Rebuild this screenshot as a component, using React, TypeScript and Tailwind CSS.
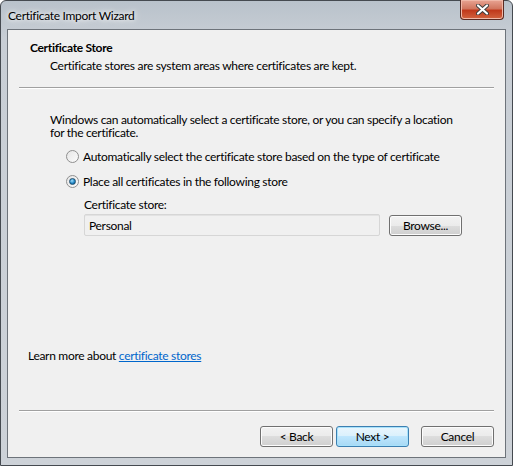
import { useState } from 'react'

const FONT = "font-['Lato',_'Noto_Sans',_sans-serif]"

function Radio({ checked, label, onClick }: { checked: boolean; label: string; onClick: () => void }) {
  return (
    <button type="button" onClick={onClick} className="flex items-center gap-[4px] text-left">
      <span className="flex h-[13px] w-[13px] items-center justify-center rounded-full border border-[#8f8f8f] bg-gradient-to-br from-[#e6e6e6] to-[#fbfbfb]">
        {checked && (
          <span className="h-[7px] w-[7px] rounded-full border border-[#1f4f6f] bg-[radial-gradient(circle_at_40%_35%,_#9ee0ff,_#1a7fbf_60%,_#0b4a7a)]" />
        )}
      </span>
      <span>{label}</span>
    </button>
  )
}

function WinButton({ children, focused }: { children: React.ReactNode; focused?: boolean }) {
  return (
    <button
      type="button"
      className={`flex h-[21px] w-[73px] items-center justify-center rounded-[3px] border text-[12px] text-black ${
        focused
          ? 'border-[#3c7fb1] bg-[linear-gradient(#eaf6fd_0%,#d9f0fc_50%,#bee6fd_50%,#a7d9f5_100%)] shadow-[inset_0_0_0_1px_#a8e2fb]'
          : 'border-[#707070] bg-[linear-gradient(#f2f2f2_0%,#ebebeb_50%,#dddddd_50%,#cfcfcf_100%)] shadow-[inset_0_0_0_1px_#fcfcfc]'
      }`}
    >
      {children}
    </button>
  )
}

export default function App() {
  const [mode, setMode] = useState<'auto' | 'place'>('place')

  return (
    <div className={`${FONT} h-[466px] w-[513px] text-[12px] leading-[13px] tracking-[-0.3px] text-black`}>
      <div className="flex h-full w-full flex-col rounded-t-[6px] border border-[#454a50] bg-[linear-gradient(180deg,#b9c2cb_0%,#c8ced5_8%,#cdd2d8_100%)] px-[6px] pb-[7px]">
        {/* title bar */}
        <div className="relative flex h-[28px] shrink-0 items-center pl-[1px]">
          <span className="text-[12px] text-black [text-shadow:0_0_8px_#ffffff,0_0_4px_#ffffff]">Certificate Import Wizard</span>
          <div className="absolute right-[2px] top-[-1px] flex h-[20px] w-[44px] items-center justify-center rounded-b-[4px] border border-t-0 border-[#5a2a22] bg-[linear-gradient(#e8a493_0%,#d1765f_45%,#c0391c_55%,#d2633f_100%)] shadow-[inset_0_0_0_1px_#f0b8a8]">
            <svg width="13" height="11" viewBox="0 0 13 11">
              <path d="M2 1.5 L11 9.5 M11 1.5 L2 9.5" stroke="#3b3b3b" strokeWidth="4" strokeLinecap="round" />
              <path d="M2 1.5 L11 9.5 M11 1.5 L2 9.5" stroke="#ffffff" strokeWidth="2.2" strokeLinecap="round" />
            </svg>
          </div>
        </div>

        {/* client area */}
        <div className="flex flex-1 flex-col border border-[#6d737a] bg-[#f0f0f0]">
          <div className="px-[21px] pt-[11px]">
            <div className="pl-[1px] font-bold">Certificate Store</div>
            <div className="mt-[5px] pl-[21px]">Certificate stores are system areas where certificates are kept.</div>
          </div>
          <div className="mx-[11px] mt-[15px] h-[2px] border-t border-b border-t-[#a0a0a0] border-b-[#ffffff]" />

          <div className="flex flex-1 flex-col px-[42px] pt-[24px]">
            <p className="w-[415px]">
              Windows can automatically select a certificate store, or you can specify a location for the certificate.
            </p>
            <div className="mt-[11px] flex flex-col gap-[12px] pl-[16px]">
              <Radio
                checked={mode === 'auto'}
                label="Automatically select the certificate store based on the type of certificate"
                onClick={() => setMode('auto')}
              />
              <Radio
                checked={mode === 'place'}
                label="Place all certificates in the following store"
                onClick={() => setMode('place')}
              />
            </div>
            <div className="mt-[10px] pl-[34px]">
              <div>Certificate store:</div>
              <div className="mt-[3px] flex items-center gap-[9px]">
                <div className="flex h-[22px] w-[296px] items-center rounded-[2px] border border-[#d6d6d6] bg-[#f0f0f0] px-[4px] shadow-[inset_0_1px_0_#e2e2e2]">
                  Personal
                </div>
                <WinButton>Browse...</WinButton>
              </div>
            </div>
            <div className="flex-1" />
            <div className="-ml-[22px] mb-[48px]">
              Learn more about{' '}
              <a href="#" className="text-[#0066cc] underline">
                certificate stores
              </a>
            </div>
          </div>

          <div className="mx-[11px] h-[2px] border-t border-b border-t-[#a0a0a0] border-b-[#ffffff]" />
          <div className="flex items-center justify-end px-[11px] pb-[10px] pt-[14px]">
            <WinButton>&lt; Back</WinButton>
            <div className="ml-[3px]">
              <WinButton focused>Next &gt;</WinButton>
            </div>
            <div className="ml-[12px]">
              <WinButton>Cancel</WinButton>
            </div>
          </div>
        </div>
      </div>
    </div>
  )
}
